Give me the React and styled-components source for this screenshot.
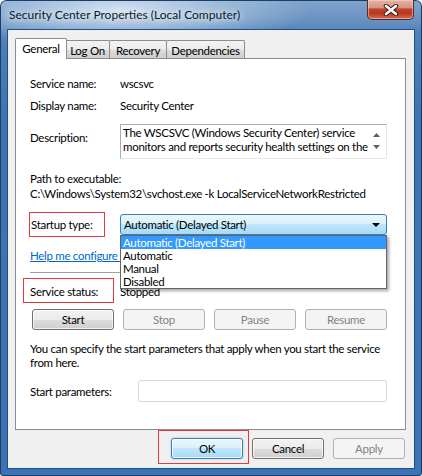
import React from "react";
import styled, { createGlobalStyle, css } from "styled-components";

const GlobalStyle = createGlobalStyle`
  html, body {
    margin: 0;
    padding: 0;
    background: #ffffff;
  }
  body {
    font-family: Lato, "Liberation Sans", sans-serif;
    font-size: 11.5px;
    letter-spacing: -0.3px;
    color: #000;
  }
  * {
    box-sizing: border-box;
  }
`;

export default function App() {
  return (
    <>
      <GlobalStyle />
      <Window>
        <TitleBar>
          <Title>Security Center Properties (Local Computer)</Title>
          <CloseButton>
            <svg width="16" height="12" viewBox="0 0 16 12">
              <path d="M3 2 L13 10 M13 2 L3 10" stroke="#3a1a14" strokeWidth="4.5" strokeLinecap="round" />
              <path d="M3 2 L13 10 M13 2 L3 10" stroke="#ffffff" strokeWidth="2.6" strokeLinecap="round" />
            </svg>
          </CloseButton>
        </TitleBar>

        <Client>
          <TabStrip>
            <Tab $active $width={52}>General</Tab>
            <Tab $width={45}>Log On</Tab>
            <Tab $width={58}>Recovery</Tab>
            <Tab $width={79}>Dependencies</Tab>
          </TabStrip>

          <Panel>
            <Row $mt={0}>
              <Label>Service name:</Label>
              <Value>wscsvc</Value>
            </Row>
            <Row $mt={7}>
              <Label>Display name:</Label>
              <Value>Security Center</Value>
            </Row>
            <Row $mt={11} $top>
              <Label $pt={6}>Description:</Label>
              <DescBox>
                <DescText>
                  The WSCSVC (Windows Security Center) service
                  <br />
                  monitors and reports security health settings on the
                </DescText>
                <ScrollArrows>
                  <svg width="7" height="4" viewBox="0 0 7 4">
                    <path d="M0 4 L3.5 0 L7 4 Z" fill="#606060" />
                  </svg>
                  <svg width="7" height="4" viewBox="0 0 7 4">
                    <path d="M0 0 L7 0 L3.5 4 Z" fill="#606060" />
                  </svg>
                </ScrollArrows>
              </DescBox>
            </Row>

            <Line $mt={12}>Path to executable:</Line>
            <Line $mt={0}>C:\Windows\System32\svchost.exe -k LocalServiceNetworkRestricted</Line>

            <Row $mt={11}>
              <Marked>Startup type:</Marked>
              <ComboWrap>
                <Combo>
                  <span>Automatic (Delayed Start)</span>
                  <svg width="8" height="4" viewBox="0 0 8 4">
                    <path d="M0 0 L8 0 L4 4 Z" fill="#000" />
                  </svg>
                </Combo>
                <DropList>
                  <DropItem $selected>Automatic (Delayed Start)</DropItem>
                  <DropItem>Automatic</DropItem>
                  <DropItem>Manual</DropItem>
                  <DropItem>Disabled</DropItem>
                </DropList>
              </ComboWrap>
            </Row>

            <Link $mt={11}>Help me configure service startup options.</Link>
            <Separator />

            <Row $mt={11}>
              <StatusLabel>Service status:</StatusLabel>
              <Value>Stopped</Value>
            </Row>

            <ButtonRow>
              <Button>Start</Button>
              <Button disabled>Stop</Button>
              <Button disabled>Pause</Button>
              <Button disabled>Resume</Button>
            </ButtonRow>

            <Paragraph>
              You can specify the start parameters that apply when you start the service
              <br />
              from here.
            </Paragraph>

            <Row $mt={10} $cols="108px 1fr">
              <Label>Start parameters:</Label>
              <TextInput />
            </Row>
          </Panel>

          <DialogButtons>
            <DialogButton $default $marked>OK</DialogButton>
            <DialogButton>Cancel</DialogButton>
            <DialogButton disabled>Apply</DialogButton>
          </DialogButtons>
        </Client>
      </Window>
    </>
  );
}

const Window = styled.div`
  width: 422px;
  height: 476px;
  padding: 0 8px 8px;
  display: flex;
  flex-direction: column;
  border-radius: 6px 6px 3px 3px;
  background:
    radial-gradient(ellipse 190px 40px at 120px 10px, rgba(214, 228, 243, 0.95), rgba(180, 204, 230, 0.6) 55%, rgba(160, 190, 222, 0) 100%),
    linear-gradient(180deg, #7fa3cc 0px, #6c94c2 18px, #4e80b9 34px, #3c73b2 120px, #3a74b6 100%);
  box-shadow: inset 0 0 0 1px #1f3d62;
`;

const TitleBar = styled.div`
  height: 30px;
  display: flex;
  align-items: flex-start;
`;

const Title = styled.div`
  margin: 7px 0 0 1px;
  line-height: 16px;
  font-size: 12px;
  letter-spacing: 0;
  color: #0c1a2a;
  text-shadow: 0 0 6px rgba(255, 255, 255, 0.95), 0 0 10px rgba(255, 255, 255, 0.7);
`;

const CloseButton = styled.div`
  margin-left: auto;
  width: 47px;
  height: 20px;
  display: flex;
  align-items: center;
  justify-content: center;
  border: 1px solid #5a2b22;
  border-top: none;
  border-radius: 0 0 5px 5px;
  background: linear-gradient(180deg, #e2b3a8 0%, #d59585 40%, #c2432c 48%, #b83620 70%, #d0705a 100%);
  box-shadow: inset 0 0 0 1px rgba(255, 220, 210, 0.5);
`;

const Client = styled.div`
  flex: 1;
  display: flex;
  flex-direction: column;
  padding: 8px 8px 9px 7px;
  background: #f0f0f0;
  box-shadow: 0 0 0 1px #24507f;
`;

const TabStrip = styled.div`
  height: 20px;
  display: flex;
  align-items: flex-end;
  position: relative;
  z-index: 1;
`;

const Tab = styled.div`
  width: ${(p) => p.$width}px;
  height: 18px;
  margin-left: -1px;
  display: flex;
  align-items: center;
  justify-content: center;
  border: 1px solid #898c95;
  border-bottom: none;
  border-radius: 2px 2px 0 0;
  background: linear-gradient(180deg, #f3f3f3 0%, #ebebeb 50%, #dddddd 51%, #cfcfcf 100%);
  padding-top: 1px;

  &:first-child {
    margin-left: 0;
  }

  ${(p) =>
    p.$active &&
    css`
      height: 21px;
      margin-bottom: -1px;
      background: #ffffff;
      padding-top: 0;
      padding-bottom: 2px;
      margin-right: -1px;
      position: relative;
      z-index: 2;
    `}
`;

const Panel = styled.div`
  height: 372px;
  display: flex;
  flex-direction: column;
  padding: 17px 18px 0 14px;
  background: #ffffff;
  border: 1px solid #898c95;
`;

const Row = styled.div`
  margin-top: ${(p) => p.$mt}px;
  display: grid;
  grid-template-columns: ${(p) => p.$cols || "90px 1fr"};
  align-items: ${(p) => (p.$top ? "start" : "center")};
  line-height: 15px;
  position: relative;
`;

const Label = styled.div`
  padding-top: ${(p) => p.$pt || 0}px;
  white-space: nowrap;
`;

const Value = styled.div`
  white-space: nowrap;
`;

const Marked = styled.div`
  justify-self: start;
  margin-left: -1px;
  padding: 4px 12px 4px 1px;
  border: 1px solid #e8383d;
  white-space: nowrap;
`;

const StatusLabel = styled.div`
  position: relative;
  white-space: nowrap;

  &::after {
    content: "";
    position: absolute;
    left: -7px;
    top: -6px;
    width: 89px;
    height: 23px;
    border: 1px solid #e8383d;
  }
`;

const DescBox = styled.div`
  height: 35px;
  display: flex;
  border: 1px solid #abadb3;
  border-right-color: #e3e9ef;
  border-bottom-color: #e3e9ef;
  background: #ffffff;
  overflow: hidden;
`;

const DescText = styled.div`
  flex: 1;
  padding: 1px 2px;
  line-height: 14px;
  white-space: nowrap;
  overflow: hidden;
`;

const ScrollArrows = styled.div`
  width: 17px;
  display: flex;
  flex-direction: column;
  align-items: center;
  justify-content: space-between;
  padding: 8px 0 9px;
  margin-right: 1px;
`;

const Line = styled.div`
  margin-top: ${(p) => p.$mt}px;
  line-height: 15px;
  white-space: nowrap;
`;

const ComboWrap = styled.div`
  position: relative;
  z-index: 3;
`;

const Combo = styled.div`
  height: 21px;
  display: flex;
  align-items: center;
  justify-content: space-between;
  padding: 0 6px 0 3px;
  border: 1px solid #3c7fb1;
  border-radius: 3px;
  background: linear-gradient(180deg, #eaf6fd 0%, #d9f0fc 49%, #bee6fd 50%, #a7d9f5 100%);
`;

const DropList = styled.div`
  position: absolute;
  top: 100%;
  left: 0;
  width: 267px;
  border: 1px solid #646464;
  background: #ffffff;
  box-shadow: 2px 2px 3px rgba(0, 0, 0, 0.35);
`;

const DropItem = styled.div`
  height: 13px;
  line-height: 13px;
  padding-left: 2px;
  ${(p) =>
    p.$selected &&
    css`
      background: #3399ff;
      color: #ffffff;
    `}
`;

const Link = styled.div`
  margin-top: ${(p) => p.$mt}px;
  line-height: 15px;
  color: #0066cc;
  text-decoration: underline;
  white-space: nowrap;
`;

const Separator = styled.div`
  margin-top: 9px;
  height: 1px;
  background: #a0a0a0;
`;

const ButtonRow = styled.div`
  margin: 10px 0 0 2px;
  display: grid;
  grid-template-columns: repeat(4, 1fr);
  gap: 9px;
`;

const buttonBase = css`
  height: 21px;
  padding: 0;
  font: inherit;
  letter-spacing: inherit;
  color: #000;
  border: 1px solid #707070;
  border-radius: 3px;
  background: linear-gradient(180deg, #f2f2f2 0%, #ebebeb 50%, #dddddd 51%, #cfcfcf 100%);
  box-shadow: inset 0 0 0 1px rgba(255, 255, 255, 0.7);

  &:disabled {
    color: #838383;
    border-color: #adb2b5;
    background: #f4f4f4;
    box-shadow: none;
  }
`;

const Button = styled.button`
  ${buttonBase}
`;

const Paragraph = styled.div`
  margin-top: 12px;
  line-height: 14px;
  white-space: nowrap;
`;

const TextInput = styled.div`
  height: 22px;
  border: 1px solid #d5d9de;
  border-radius: 2px;
  background: #ffffff;
`;

const DialogButtons = styled.div`
  margin-top: 8px;
  display: flex;
  justify-content: flex-end;
  gap: 9px;
  padding-right: 1px;
`;

const DialogButton = styled.button`
  ${buttonBase}
  width: 72px;
  position: relative;

  ${(p) =>
    p.$default &&
    css`
      border-color: #3c7fb1;
      background: linear-gradient(180deg, #eaf6fd 0%, #d9f0fc 49%, #bee6fd 50%, #a7d9f5 100%);
      box-shadow: inset 0 0 0 1px rgba(255, 255, 255, 0.8), 0 0 2px rgba(60, 127, 177, 0.5);
    `}

  ${(p) =>
    p.$marked &&
    css`
      &::after {
        content: "";
        position: absolute;
        left: -14px;
        top: -9px;
        right: -7px;
        bottom: -6px;
        border: 1px solid #e8383d;
      }
    `}
`;
